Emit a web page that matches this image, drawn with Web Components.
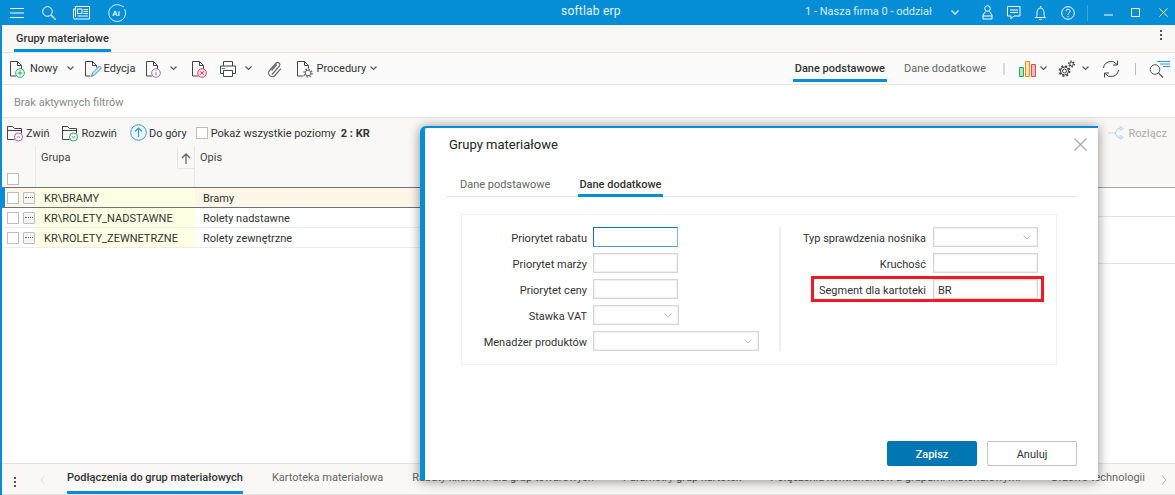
<!DOCTYPE html>
<html lang="pl">
<head>
<meta charset="utf-8">
<title>softlab erp</title>
<style>
  html, body { margin: 0; height: 100%; overflow: hidden; background: #fff; }
  body { font: 11px/1.2 Roboto, "Liberation Sans", sans-serif; color: #333; }
</style>
</head>
<body>

<erp-shell>
  <erp-titlebar></erp-titlebar>
  <erp-tabbar><tab-item active>Grupy materiałowe</tab-item></erp-tabbar>

  <erp-toolbar>
    <tool-btn slot="left" icon="docNew" label="Nowy" chevron style="margin-left:7px;--chev:9px"></tool-btn>
    <tool-btn slot="left" icon="docEdit" label="Edycja" style="margin-left:10px;--gap:2px"></tool-btn>
    <tool-btn slot="left" icon="docInfo" chevron style="margin-left:10px"></tool-btn>
    <tool-btn slot="left" icon="docDel" style="margin-left:14px"></tool-btn>
    <tool-btn slot="left" icon="printer" chevron style="margin-left:10px;--chev:8px"></tool-btn>
    <tool-btn slot="left" icon="clip" style="margin-left:15px"></tool-btn>
    <tool-btn slot="left" icon="docGear" label="Procedury" chevron style="margin-left:13px;--gap:2px;--chev:4px"></tool-btn>

    <tab-item slot="right" active>Dane podstawowe</tab-item>
    <tab-item slot="right" style="margin-left:15px">Dane dodatkowe</tab-item>
    <tool-sep slot="right" style="margin:0 14px 0 15px"></tool-sep>
    <tool-btn slot="right" icon="chart" chevron style="--chev:4px"></tool-btn>
    <tool-btn slot="right" icon="gears" chevron style="margin-left:11px"></tool-btn>
    <tool-btn slot="right" icon="refresh" style="margin-left:13px"></tool-btn>
    <tool-sep slot="right" thin style="margin:0 13px 0 15px"></tool-sep>
    <tool-btn slot="right" icon="searchList"></tool-btn>
  </erp-toolbar>

  <erp-filterbar>Brak aktywnych filtrów</erp-filterbar>

  <tree-toolbar>
    <tool-btn icon="folderUp" label="Zwiń" style="margin-left:4px;--gap:2px"></tool-btn>
    <tool-btn icon="folderDown" label="Rozwiń" style="margin-left:12px;--gap:2px"></tool-btn>
    <tool-btn icon="arrowUp" label="Do góry" style="margin-left:13px;--gap:2px"></tool-btn>
    <check-box style="margin-left:9px"></check-box>
    <span style="margin-left:3px;padding-top:2px">Pokaż wszystkie poziomy</span>
    <b style="margin-left:5px;padding-top:2px;font-weight:700;color:#333">2 : KR</b>
    <tool-btn slot="end" icon="unlink" label="Rozłącz" faded></tool-btn>
  </tree-toolbar>

  <data-grid>
    <grid-row current code="KR\BRAMY" text="Bramy"></grid-row>
    <grid-row code="KR\ROLETY_NADSTAWNE" text="Rolety nadstawne"></grid-row>
    <grid-row code="KR\ROLETY_ZEWNETRZNE" text="Rolety zewnętrzne"></grid-row>
  </data-grid>

  <bottom-tabs>
    <tab-item active tall>Podłączenia do grup materiałowych</tab-item>
    <tab-item tall>Kartoteka materiałowa</tab-item>
    <tab-item tall>Rabaty klientów dla grup towarowych</tab-item>
    <tab-item tall>Parametry grup kartotek</tab-item>
    <tab-item tall>Połączenia kontrahentów z grupami materiałowymi</tab-item>
    <tab-item tall style="margin-left:2px">Drzewo technologii</tab-item>
  </bottom-tabs>
</erp-shell>

<modal-dialog heading="Grupy materiałowe">
  <form-field slot="left" label="Priorytet rabatu" width="85" focused></form-field>
  <form-field slot="left" label="Priorytet marży" width="85"></form-field>
  <form-field slot="left" label="Priorytet ceny" width="85"></form-field>
  <form-field slot="left" label="Stawka VAT" width="86" select></form-field>
  <form-field slot="left" label="Menadżer produktów" width="166" select></form-field>

  <form-field slot="right" label="Typ sprawdzenia nośnika" width="105" select></form-field>
  <form-field slot="right" label="Kruchość" width="105"></form-field>
  <form-field slot="right" label="Segment dla kartoteki" width="105" value="BR" marked></form-field>
</modal-dialog>

<script>
'use strict';

// doc outline shared by the toolbar icons
const DOC = '<path d="M1.5 16V1.5h7l4 4v5M8.5 1.5v4h4M1.5 16h6" fill="none" stroke="#444"/>';

const ICONS = {
  docNew: [18, 18, DOC + '<circle cx="11" cy="13" r="4.3" fill="#fff" stroke="#1fae5c"/><path d="M11 10.5v5M8.5 13h5" stroke="#1fae5c"/>'],
  docEdit: [18, 18, '<path d="M1.5 16V1.5h7l4 4v2M8.5 1.5v4h4M1.5 16h5" fill="none" stroke="#444"/><path d="M7.5 16.5l1-3.5 7-7 2 2-7 7z" fill="#cfe6f7" stroke="#3b8fd3"/>'],
  docInfo: [18, 18, DOC + '<circle cx="11" cy="13" r="4.3" fill="#fff" stroke="#a864c0"/><path d="M11 12.2v3.2M11 10.4v1" stroke="#a864c0"/>'],
  docDel: [18, 18, DOC + '<circle cx="11" cy="13" r="4.3" fill="#fde" stroke="#e8484f"/><path d="M9.3 11.3l3.4 3.4M12.7 11.3l-3.4 3.4" stroke="#e8484f"/>'],
  printer: [18, 18, '<path d="M4.5 6V1.5h9V6M4.5 13.5h-3V6h15v7.5h-3" fill="none" stroke="#444"/><path d="M4.5 10.5h9v6h-9z" fill="#fff" stroke="#444"/><path d="M3 8.5h3" stroke="#2b9ae0"/>'],
  clip: [16, 18, '<path d="M5 14.5L12.5 6a2.3 2.3 0 0 0-3.4-3L2.6 10.5a3.6 3.6 0 0 0 5.300 5l6-6.800M4.600 10.500l5.200-6" fill="none" stroke="#666" stroke-width="1.200"/>'],
  docGear: [18, 18, '<path d="M1.5 16V1.5h7l4 4v3M8.5 1.5v4h4M1.5 16h6" fill="none" stroke="#444"/><circle cx="12" cy="13" r="2.800" fill="#fff" stroke="#666"/><circle cx="12" cy="13" r="4" fill="none" stroke="#666" stroke-width="1.300" stroke-dasharray="1.500 1.640"/>'],
  chart: [17, 18, '<path d="M.5 7.5h4v9h-4z" fill="#b8e6c6" stroke="#1fa85a"/><path d="M6.500 1.500h4v15h-4z" fill="#fde3a8" stroke="#ef8a2c"/><path d="M12.500 4.500h4v12h-4z" fill="#f7b9b9" stroke="#e44d4d"/>'],
  gears: [17, 18, '<circle cx="6.500" cy="11" r="2" fill="none" stroke="#444"/><circle cx="6.500" cy="11" r="4" fill="none" stroke="#444"/><circle cx="6.500" cy="11" r="5" fill="none" stroke="#444" stroke-width="1.800" stroke-dasharray="2 1.930"/><circle cx="13.500" cy="4" r="1.800" fill="none" stroke="#444"/><circle cx="13.500" cy="4" r="2.800" fill="none" stroke="#444" stroke-width="1.500" stroke-dasharray="1.400 1.530"/>'],
  refresh: [18, 18, '<path d="M1.500 8a7.500 7.500 0 0 1 13.500-3.500M16.500 10A7.500 7.500 0 0 1 3 13.500" fill="none" stroke="#444"/><path d="M15.500 .5v4.500H11M2.500 17.500V13H7" fill="none" stroke="#444"/>'],
  searchList: [21, 18, '<circle cx="6" cy="9.500" r="4.800" fill="none" stroke="#555"/><path d="M9.500 13l4.500 4.500" stroke="#555" stroke-width="1.100"/><path d="M8 1.500h13M11 4h10M14 6.500h7" stroke="#2b9ae0"/>'],
  folderUp: [18, 18, '<path d="M1.500 15.500V2.500h5l2 2h7v5M1.500 6.500h14M1.500 15.500h7" fill="none" stroke="#444"/><circle cx="12.500" cy="13" r="4" fill="#fff" stroke="#b75cc6"/><path d="M10.700 13.800l1.800-1.600 1.800 1.600" fill="none" stroke="#b75cc6"/>'],
  folderDown: [18, 18, '<path d="M1.500 15.500V2.500h5l2 2h7v5M1.500 6.500h14M1.500 15.500h7" fill="none" stroke="#444"/><circle cx="12.500" cy="13" r="4" fill="#fff" stroke="#1fae5c"/><path d="M10.700 12.200l1.800 1.600 1.800-1.600" fill="none" stroke="#1fae5c"/>'],
  arrowUp: [17, 17, '<circle cx="8.500" cy="8.500" r="7.800" fill="#eaf5fd" stroke="#3d9ad9"/><path d="M8.500 13V4M5 7.500l3.500-3.500L12 7.500" fill="none" stroke="#3d9ad9" stroke-width="1.200"/>'],
  unlink: [17, 14, '<path d="M0 7h7M7 7l3-4.500h2M7 7l3 4.500h2" fill="none" stroke="#bcd9ee" stroke-width="1.200"/><path d="M12 .5l3.500 2-3.500 2zM12 9.500l3.500 2-3.500 2z" fill="#dcecf8" stroke="#bcd9ee"/>'],
  menu: [14, 12, '<path d="M0 1.500h14M0 6h14M0 10.500h14" stroke="#fff" stroke-width="1.100"/>'],
  search: [14, 14, '<circle cx="5.500" cy="5.500" r="4.800" fill="none" stroke="#fff"/><path d="M9 9l4.700 4.700" stroke="#fff" stroke-width="1.100"/>'],
  news: [17, 14, '<path d="M2.500.5h14v12.500H1.500a1 1 0 0 1-1-1V3h2zM2.500 3v8" fill="none" stroke="#fff"/><path d="M4.500 3h4.500v4.500H4.500z" fill="none" stroke="#fff"/><path d="M10.500 3.500h4.500M10.500 5.500h4.500M10.500 7.500h4.500M4.500 10h10.500" stroke="#fff"/>'],
  ai: [19, 18, '<path d="M17.500 5A8.400 8.400 0 1 1 14 1.600c1 .4 2.700 1.300 3 1" fill="none" stroke="#fff" stroke-opacity=".85"/><text x="9" y="12" text-anchor="middle" font-family="Roboto" font-size="8" font-weight="500" fill="#fff">Ai</text>'],
  user: [11, 15, '<circle cx="5.500" cy="3.500" r="2.800" fill="none" stroke="#fff"/><path d="M3.500 6.500L1 10v4h9v-4L7.500 6.500M1 11h9" fill="none" stroke="#fff"/>'],
  chat: [14, 14, '<path d="M.5.5h12.500v9.500H7l-3 3v-3H.5z" fill="none" stroke="#fff"/><path d="M3 4h8M3 6.500h8" stroke="#fff"/>'],
  bell: [11, 14, '<path d="M.5 11.500c1.500-1 1.500-2.500 1.500-5 0-2.500 1.500-4.500 3.500-4.500s3.500 2 3.500 4.500c0 2.500 0 4 1.500 5zM4 13.500h3M5.500 0v2" fill="none" stroke="#fff"/>'],
  help: [14, 14, '<circle cx="7" cy="7" r="6.300" fill="none" stroke="#fff"/><path d="M5 5.300a2 2 0 1 1 3 1.700c-.7.500-1 .8-1 1.800M7 10v1.200" fill="none" stroke="#fff"/>'],
  minimize: [9, 2, '<path d="M0 1h9" stroke="#fff"/>'],
  maximize: [9, 9, '<path d="M.5.5h8v8h-8z" fill="none" stroke="#fff"/>'],
  close: [9, 9, '<path d="M.5.5l8 8M8.500.5l-8 8" stroke="#fff"/>'],
  chevronDown: [7, 5, '<path d="M.5.5L3.500 3.500 6.500.5" fill="none" stroke="#555" stroke-width="1.100"/>']
};

function iconSvg(name) {
  const [w, h, body] = ICONS[name];
  return `<svg width="${w}" height="${h}" viewBox="0 0 ${w} ${h}" style="display:block;flex:none">${body}</svg>`;
}

// base: fills an open shadow root from _markup()
class ShadowEl extends HTMLElement {
  constructor() {
    super();
    this.attachShadow({ mode: 'open' });
  }
  connectedCallback() {
    this.shadowRoot.innerHTML = this._markup();
  }
}

class ErpShell extends ShadowEl {
  _markup() {
    return `<style>
      :host { display: flex; flex-direction: column; height: 495px; border-left: 2px solid #058dd6; box-sizing: border-box; }
    </style><slot></slot>`;
  }
}

class ErpTitlebar extends ShadowEl {
  _markup() {
    return `<style>
      :host { display: flex; align-items: center; height: 25px; margin-left: -2px; padding-right: 7px; background: #058dd6; color: #fff; font-size: 12px; white-space: nowrap; }
      .i { display: flex; flex: none; }
      .left { display: flex; align-items: center; width: 561px; flex: none; }
      .center { color: #e6f4fc; letter-spacing: .2px; flex: none; padding-bottom: 2px; }
      .right { display: flex; align-items: center; margin-left: auto; }
      .firm { color: #d5ecf9; font-size: 11px; padding-bottom: 2px; }
      .sep { width: 1px; height: 16px; background: #3aa5df; }
    </style>
    <div class="left">
      <span class="i" style="margin-left:10px">${iconSvg('menu')}</span>
      <span class="i" style="margin-left:18px">${iconSvg('search')}</span>
      <span class="i" style="margin-left:17px">${iconSvg('news')}</span>
      <span class="i" style="margin-left:17px">${iconSvg('ai')}</span>
    </div>
    <span class="center">softlab erp</span>
    <div class="right">
      <span class="firm">1 - Nasza firma 0 - oddział</span>
      <svg style="margin-left:19px;flex:none" width="8" height="5" viewBox="0 0 8 5"><path d="M.5.5L4 4 7.500.5" fill="none" stroke="#d5ecf9" stroke-width="1.400"/></svg>
      <span class="i" style="margin-left:23px">${iconSvg('user')}</span>
      <span class="i" style="margin-left:14px">${iconSvg('chat')}</span>
      <span class="i" style="margin-left:14px">${iconSvg('bell')}</span>
      <span class="i" style="margin-left:15px">${iconSvg('help')}</span>
      <span class="sep" style="margin-left:12px"></span>
      <span class="i" style="margin-left:16px;margin-top:5px">${iconSvg('minimize')}</span>
      <span class="i" style="margin-left:18px">${iconSvg('maximize')}</span>
      <span class="i" style="margin-left:19px">${iconSvg('close')}</span>
    </div>`;
  }
}

class ErpTabbar extends ShadowEl {
  _markup() {
    return `<style>
      :host { display: flex; align-items: flex-end; justify-content: space-between; height: 28px; box-sizing: border-box; padding-left: 12px; background: #f9f8f6; border-bottom: 1px solid #e3e3e3; }
      .dots { display: flex; flex-direction: column; gap: 2px; margin: 0 13px 12px 0; }
      .dots i { width: 2px; height: 2px; background: #555; }
    </style><slot></slot><span class="dots"><i></i><i></i><i></i></span>`;
  }
}

class TabItem extends ShadowEl {
  _markup() {
    return `<style>
      :host { display: inline-flex; align-items: center; height: 24px; box-sizing: border-box; padding: 0 2px; border-bottom: 3px solid transparent; color: #666; font-weight: 400; white-space: nowrap; flex: none; }
      :host([active]) { color: #333; font-weight: 500; border-bottom-color: #058dd6; }
      :host([tall]) { height: 29px; padding: 0; }
    </style><slot></slot>`;
  }
}

class ErpToolbar extends ShadowEl {
  _markup() {
    return `<style>
      :host { display: flex; justify-content: space-between; height: 32px; box-sizing: border-box; background: #fbfbfb; border-bottom: 1px solid #e3e3e3; }
      .side { display: flex; align-items: center; }
      .right { padding-right: 5px; align-items: flex-start; }
      .right ::slotted(tool-btn), .right ::slotted(tool-sep) { align-self: center; }
      .right ::slotted(tab-item) { height: 29px; padding-top: 5px; }
    </style>
    <div class="side"><slot name="left"></slot></div>
    <div class="side right"><slot name="right"></slot></div>`;
  }
}

class ToolBtn extends ShadowEl {
  _markup() {
    const label = this.getAttribute('label');
    return `<style>
      :host { display: inline-flex; align-items: center; flex: none; color: #333; }
      :host([faded]) { color: #aaa; }
      span { margin-left: var(--gap, 3px); padding-top: var(--label-pt, 0); }
      svg.chev { margin-left: var(--chev, 7px); }
    </style>
    ${iconSvg(this.getAttribute('icon'))}
    ${label ? `<span>${label}</span>` : ''}
    ${this.hasAttribute('chevron') ? iconSvg('chevronDown').replace('<svg', '<svg class="chev"') : ''}`;
  }
}

class ToolSep extends ShadowEl {
  _markup() {
    return `<style>
      :host { display: block; width: 2px; height: 12px; background: #ddd; flex: none; }
      :host([thin]) { width: 1px; background: #bbb; }
    </style>`;
  }
}

class ErpFilterbar extends ShadowEl {
  _markup() {
    return `<style>
      :host { display: flex; align-items: center; height: 33px; box-sizing: border-box; padding: 3px 0 0 12px; background: #fff; color: #8a8a8a; border-bottom: 1px solid #e3e3e3; }
    </style><slot></slot>`;
  }
}

class TreeToolbar extends ShadowEl {
  _markup() {
    return `<style>
      :host { display: flex; align-items: center; height: 28px; box-sizing: border-box; padding: 1px 8px 0 0; background: #f9f8f6; white-space: nowrap; --label-pt: 2px; }
      .end { margin-left: auto; display: flex; }
    </style><slot></slot><div class="end"><slot name="end"></slot></div>`;
  }
}

class CheckBox extends ShadowEl {
  _markup() {
    return `<style>
      :host { display: block; width: 12px; height: 12px; box-sizing: border-box; background: #fff; border: 1px solid #bdbdbd; flex: none; }
    </style>`;
  }
}

class DataGrid extends ShadowEl {
  _markup() {
    return `<style>
      :host { display: flex; flex-direction: column; flex: 1; min-height: 0; background: #fff; }
      .head { display: grid; grid-template-columns: 34px 159px 1fr; height: 42px; box-sizing: border-box; background: #f9f8f6; border-bottom: 1px solid #aaa; color: #444; }
      .sel { border-right: 1px solid #e6e6e6; padding: 27px 0 0 5px; }
      .col { padding: 5px 0 0 5px; position: relative; border-right: 1px solid #e6e6e6; }
      .sort { position: absolute; right: 0; top: 2px; width: 16px; height: 20px; display: flex; align-items: center; justify-content: center; border-left: 1px solid #e6e6e6; border-bottom: 1px solid #e6e6e6; }
      .body { display: flex; flex: 1; }
      .rows { flex: 1; }
      .stub { width: 77px; }
      .stub div { box-sizing: border-box; border-bottom: 1px solid #e3e3e3; }
    </style>
    <div class="head">
      <div class="sel"><check-box></check-box></div>
      <div class="col">Grupa<span class="sort"><svg width="10" height="11" viewBox="0 0 10 11"><path d="M5 11V1M1 5l4-4 4 4" fill="none" stroke="#666" stroke-width="1.300"/></svg></span></div>
      <div class="col" style="border:0">Opis</div>
    </div>
    <div class="body">
      <div class="rows"><slot></slot></div>
      <div class="stub"><div style="height:29px"></div><div style="height:47px"></div></div>
    </div>`;
  }
}

class GridRow extends ShadowEl {
  _markup() {
    return `<style>
      :host { display: grid; grid-template-columns: 34px 159px 1fr; height: 20px; box-sizing: border-box; border-bottom: 1px solid #ececec; color: #333; }
      :host([current]) { background: #fdf6e9; border-bottom-color: #6f7276; box-shadow: inset 3px 0 0 #058dd6, 0 -1px 0 #6f7276; }
      .sel { display: flex; align-items: center; gap: 4px; padding-left: 5px; background: #fff; }
      :host([current]) .sel { background: transparent; }
      .more { width: 12px; height: 12px; box-sizing: border-box; border: 1px solid #bdbdbd; border-radius: 1px; background: #f5f5f5; display: flex; align-items: center; justify-content: center; }
      .more i { width: 8px; border-top: 1px dotted #666; }
      .code { background: #ffffe4; padding: 2px 0 0 8px; display: flex; align-items: center; }
      .text { padding: 2px 0 0 8px; display: flex; align-items: center; }
    </style>
    <div class="sel"><check-box></check-box><span class="more"><i></i></span></div>
    <div class="code">${this.getAttribute('code')}</div>
    <div class="text">${this.getAttribute('text')}</div>`;
  }
}

class BottomTabs extends ShadowEl {
  _markup() {
    return `<style>
      :host { display: flex; align-items: flex-end; height: 32px; box-sizing: border-box; background: #f9f8f6; border-top: 1px solid #e3e3e3; border-bottom: 1px solid #e3e3e3; }
      .dots { display: flex; flex-direction: column; gap: 2px; margin: 0 0 7px 12px; }
      .dots i { width: 2px; height: 2px; background: #555; }
      .tabs { display: flex; gap: 29px; margin-left: 21px; flex: 1; }
      svg { flex: none; }
    </style>
    <span class="dots"><i></i><i></i><i></i></span>
    <svg style="margin:0 0 9px 24px" width="6" height="10" viewBox="0 0 6 10"><path d="M5 .5L1 5l4 4.500" fill="none" stroke="#ddd"/></svg>
    <div class="tabs"><slot></slot></div>
    <svg style="margin:0 8px 9px 0" width="6" height="10" viewBox="0 0 6 10"><path d="M1 .5L5 5 1 9.500" fill="none" stroke="#aaa"/></svg>`;
  }
}

class ModalDialog extends ShadowEl {
  _markup() {
    return `<style>
      :host { position: absolute; left: 420px; top: 126px; width: 678px; height: 354px; box-sizing: border-box; display: flex; flex-direction: column; background: #fff; border-left: 5px solid #058dd6; border-top: 2px solid #058dd6; border-top-left-radius: 6px; box-shadow: 0 1px 12px rgba(0,0,0,.45); color: #333; }
      header { display: flex; justify-content: space-between; padding: 10px 11px 0 24px; height: 30px; box-sizing: border-box; }
      h3 { margin: 0; font: 400 13px/14px Roboto, "Liberation Sans", sans-serif; color: #222; }
      .tabs { display: flex; gap: 27px; margin: 10px 21px 0; padding-left: 13px; border-bottom: 1px solid #e3e3e3; height: 29px; box-sizing: border-box; }
      .tabs tab-item { height: 29px; padding: 8px 1px 0; }
      .box { display: flex; margin: 17px 41px 0 36px; height: 151px; box-sizing: border-box; border: 1px solid #f0f0f0; padding: 12px 0 13px; }
      .col { display: flex; flex-direction: column; gap: 6px; }
      .col.l { width: 317px; --label-w: 125px; --label-gap: 6px; }
      .col.r { border-left: 2px solid #f0f0f0; padding-left: 4px; --label-w: 141px; --label-gap: 7px; }
      footer { margin-top: auto; display: flex; justify-content: flex-end; gap: 10px; padding: 0 21px 14px 0; }
      button { width: 90px; height: 25px; padding: 1px 0 0; font: 400 11px Roboto, "Liberation Sans", sans-serif; border-radius: 2px; border: 1px solid #c4c4c4; background: #fff; color: #333; }
      button.primary { background: #0077b3; border-color: #0077b3; color: #fff; font-weight: 500; }
    </style>
    <header>
      <h3>${this.getAttribute('heading')}</h3>
      <svg width="13" height="13" viewBox="0 0 13 13"><path d="M.5.5l12 12M12.500.5l-12 12" stroke="#aaa" stroke-width="1.300"/></svg>
    </header>
    <div class="tabs"><tab-item>Dane podstawowe</tab-item><tab-item active>Dane dodatkowe</tab-item></div>
    <div class="box">
      <div class="col l"><slot name="left"></slot></div>
      <div class="col r"><slot name="right"></slot></div>
    </div>
    <footer><button class="primary">Zapisz</button><button>Anuluj</button></footer>`;
  }
}

class FormField extends ShadowEl {
  _markup() {
    const value = this.getAttribute('value') || '';
    const chev = this.hasAttribute('select')
      ? '<svg width="8" height="5" viewBox="0 0 8 5"><path d="M.5.5L4 4 7.500.5" fill="none" stroke="#bbb"/></svg>'
      : '';
    return `<style>
      :host { display: flex; align-items: center; height: 20px; position: relative; color: #333; }
      label { width: var(--label-w); margin-right: var(--label-gap); padding-top: 4px; text-align: right; white-space: nowrap; flex: none; }
      .input { width: ${this.getAttribute('width')}px; height: 20px; box-sizing: border-box; border: 1px solid #d6d6d6; box-shadow: inset 0 0 0 .5px #e4e4e4; background: #fff; display: flex; align-items: center; justify-content: space-between; padding: 0 6px 0 4px; }
      .input span { padding-top: 3px; }
      :host([select]) .input { justify-content: flex-end; }
      :host([focused]) .input { border-color: #1077ac; border-right-color: #7fb9d8; border-bottom-color: #4f9cc4; box-shadow: none; }
      .mark { position: absolute; left: 26px; right: -6px; top: -3px; bottom: -3px; border: 3px solid #ed1c24; pointer-events: none; }
    </style>
    <label>${this.getAttribute('label')}</label>
    <div class="input"><span>${value}</span>${chev}</div>
    ${this.hasAttribute('marked') ? '<div class="mark"></div>' : ''}`;
  }
}

customElements.define('erp-shell', ErpShell);
customElements.define('erp-titlebar', ErpTitlebar);
customElements.define('erp-tabbar', ErpTabbar);
customElements.define('tab-item', TabItem);
customElements.define('erp-toolbar', ErpToolbar);
customElements.define('tool-btn', ToolBtn);
customElements.define('tool-sep', ToolSep);
customElements.define('erp-filterbar', ErpFilterbar);
customElements.define('tree-toolbar', TreeToolbar);
customElements.define('check-box', CheckBox);
customElements.define('data-grid', DataGrid);
customElements.define('grid-row', GridRow);
customElements.define('bottom-tabs', BottomTabs);
customElements.define('modal-dialog', ModalDialog);
customElements.define('form-field', FormField);
</script>
</body>
</html>
